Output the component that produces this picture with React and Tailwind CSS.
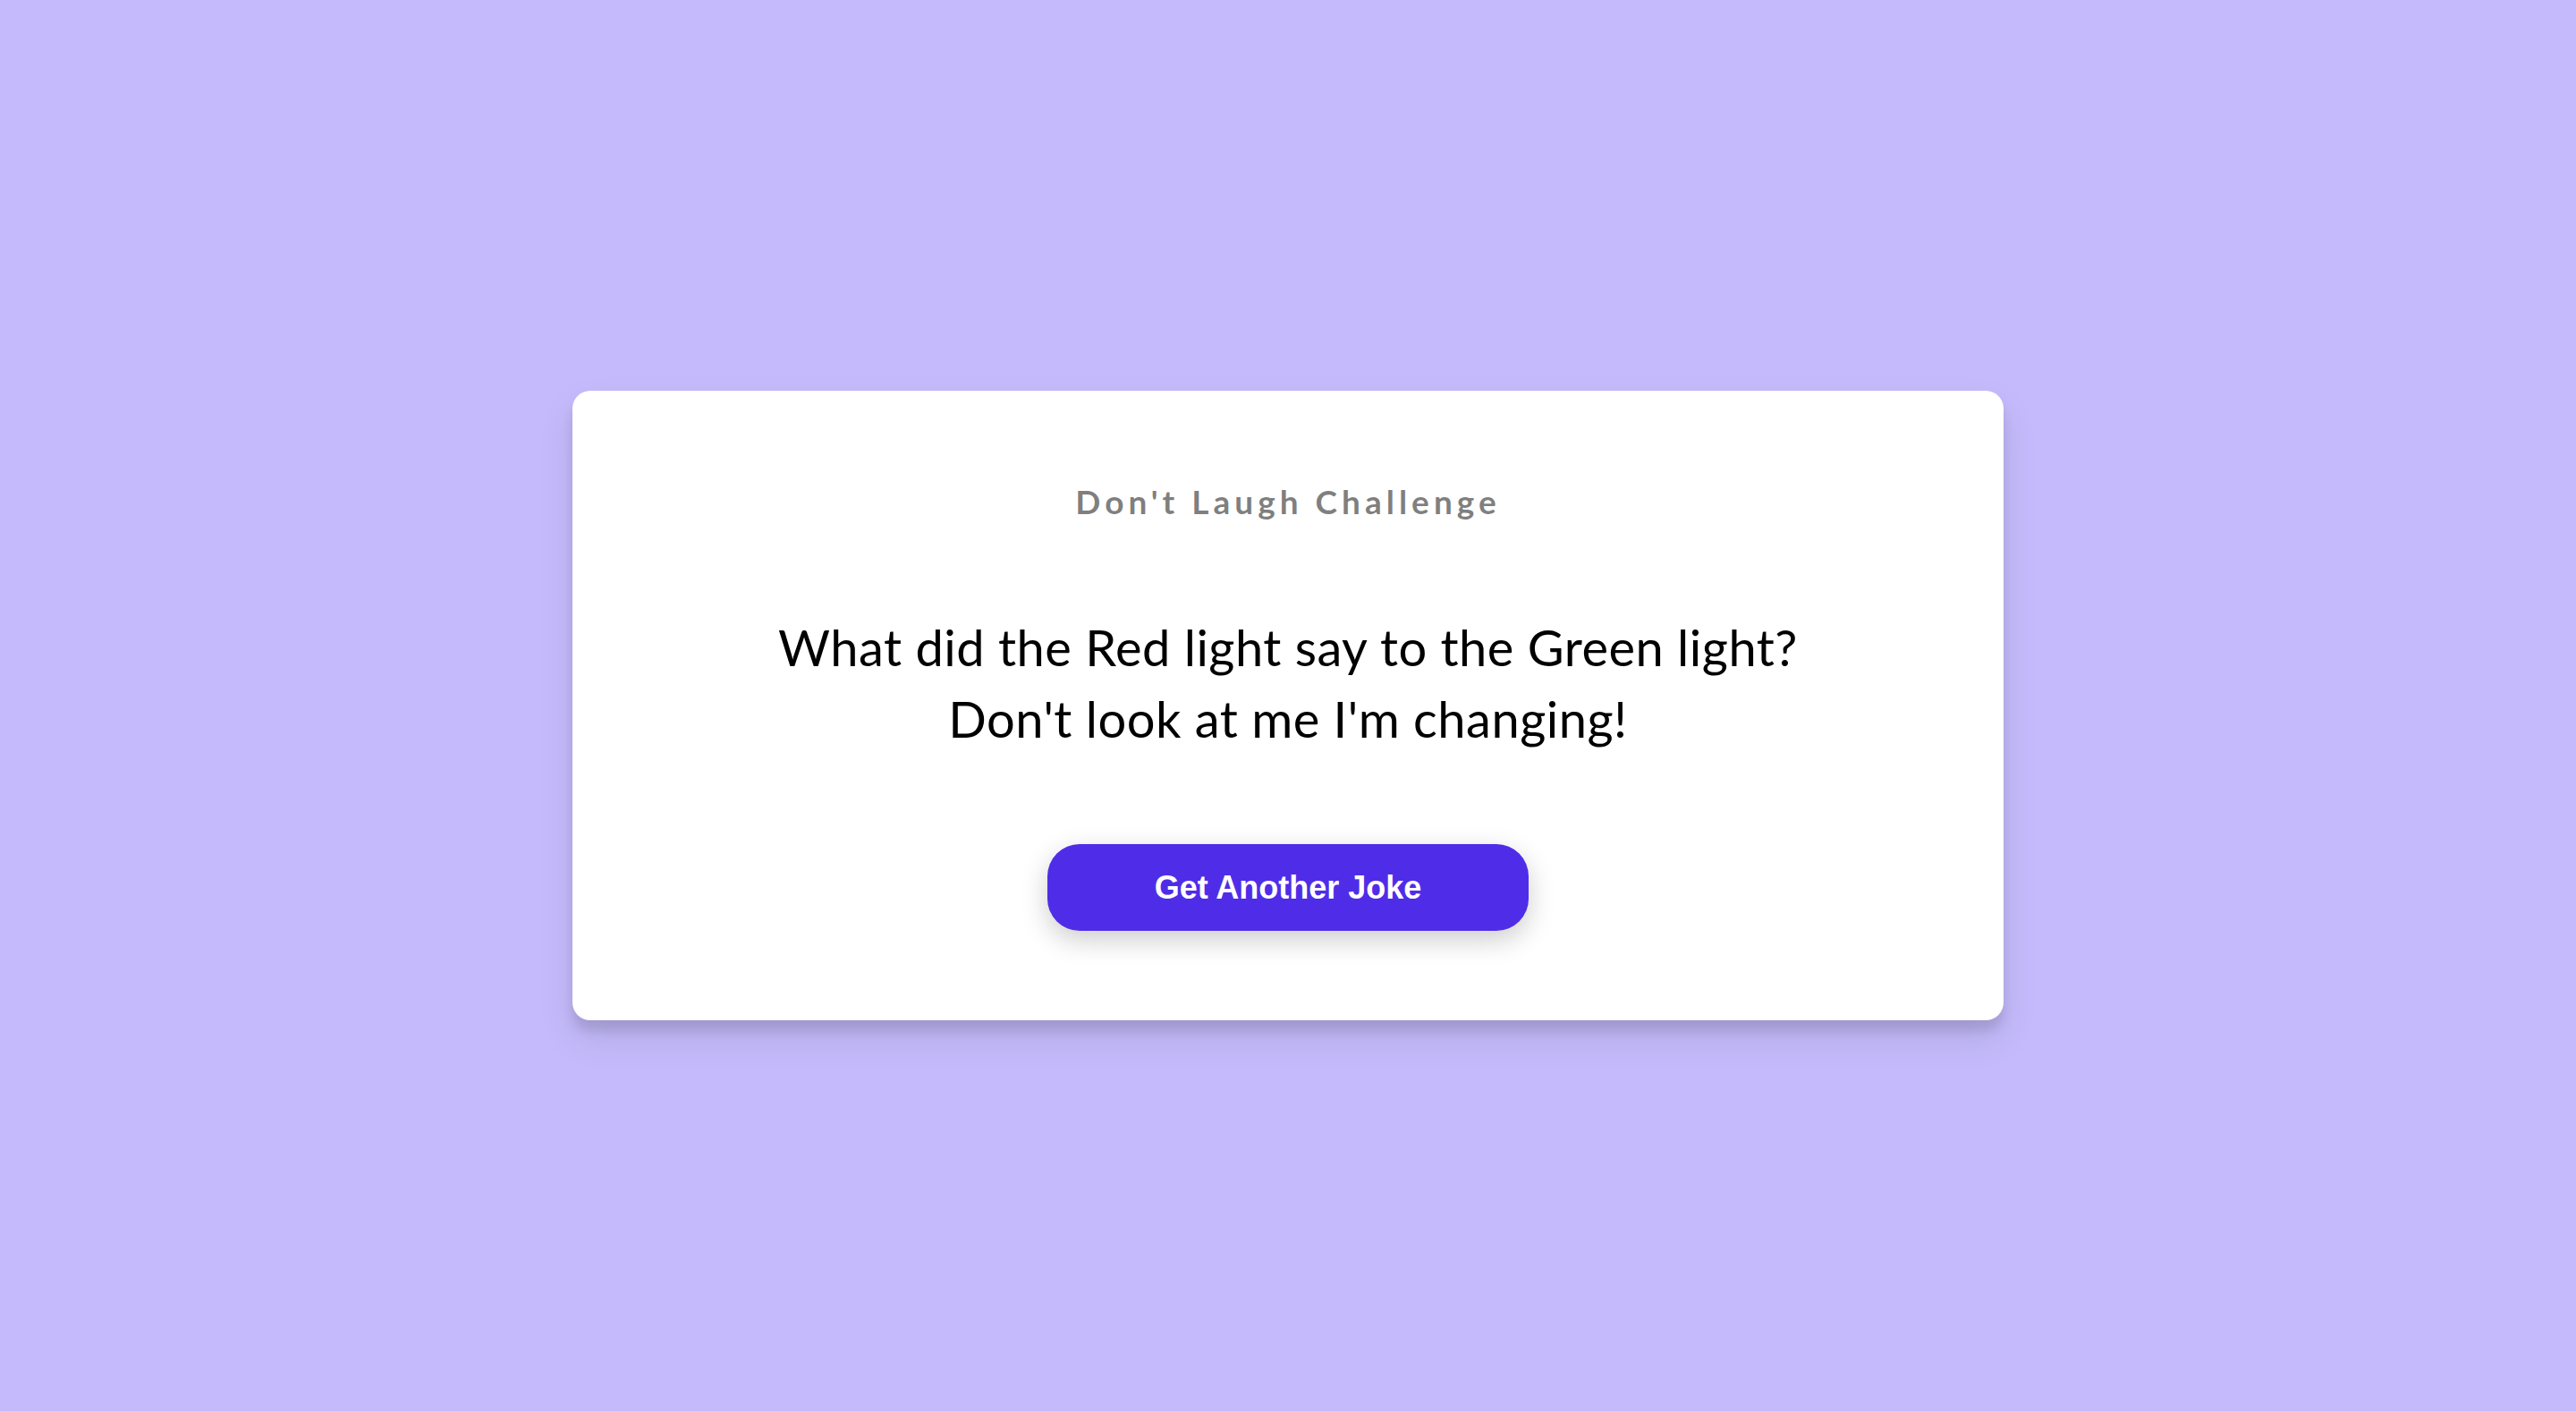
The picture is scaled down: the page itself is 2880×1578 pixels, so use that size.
export default function App() {
  const joke = "What did the Red light say to the Green light? Don't look at me I'm changing!";

  return (
    <div className="flex min-h-screen items-center justify-center bg-[#c5bbfc] px-10 font-['Lato','Open_Sans',sans-serif]">
      <div className="w-full max-w-[1600px] rounded-[20px] bg-white px-10 py-[100px] text-center shadow-[0_20px_40px_rgba(0,0,0,0.1),0_12px_12px_rgba(0,0,0,0.1)]">
        <h3 className="m-0 text-[37px] font-bold leading-[47px] tracking-[5px] text-black/50">
          Don't Laugh Challenge
        </h3>
        <div className="mx-auto my-[100px] max-w-[1200px] text-[56px] leading-[80px] tracking-[0.5px] text-black">
          {joke}
        </div>
        <button
          type="button"
          className="rounded-[36px] bg-[#4f2de8] px-[120px] py-[28px] font-['Liberation_Sans',Arial,sans-serif] text-[36px] font-bold leading-[41px] text-white shadow-[0_10px_30px_rgba(0,0,0,0.2)]"
        >
          Get Another Joke
        </button>
      </div>
    </div>
  );
}
